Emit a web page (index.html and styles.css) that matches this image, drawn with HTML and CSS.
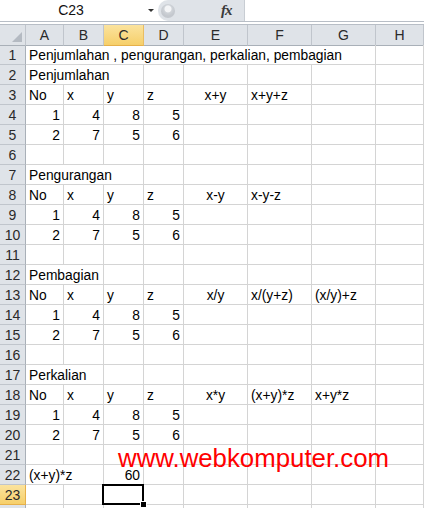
FILE: index.html
```html
<!DOCTYPE html>
<html>
<head>
<meta charset="utf-8">
<link rel="stylesheet" href="styles.css">
</head>
<body>
<div class="app">
  <div class="fbar">
    <div class="namebox"><span class="nb-text">C23</span><span class="nb-arrow"></span></div>
    <div class="capsule"><span class="cbtn"></span><span class="fx">fx</span></div>
    <div class="finput"></div>
  </div>
  <div class="gap"></div>
  <div class="sheet">
    <div class="hd corner"><span class="tri"></span></div>
    <div class="hd">A</div><div class="hd">B</div><div class="hd hsel">C</div><div class="hd">D</div><div class="hd">E</div><div class="hd">F</div><div class="hd">G</div><div class="hd">H</div>

    <div class="rh">1</div><div class="c s7">Penjumlahan , pengurangan, perkalian, pembagian</div><div class="c"></div>
    <div class="rh">2</div><div class="c s3">Penjumlahan</div><div class="c"></div><div class="c"></div><div class="c"></div><div class="c"></div><div class="c"></div>
    <div class="rh">3</div><div class="c">No</div><div class="c">x</div><div class="c">y</div><div class="c">z</div><div class="c ctr">x+y</div><div class="c">x+y+z</div><div class="c"></div><div class="c"></div>
    <div class="rh">4</div><div class="c r">1</div><div class="c r">4</div><div class="c r">8</div><div class="c r">5</div><div class="c"></div><div class="c"></div><div class="c"></div><div class="c"></div>
    <div class="rh">5</div><div class="c r">2</div><div class="c r">7</div><div class="c r">5</div><div class="c r">6</div><div class="c"></div><div class="c"></div><div class="c"></div><div class="c"></div>
    <div class="rh">6</div><div class="c"></div><div class="c"></div><div class="c"></div><div class="c"></div><div class="c"></div><div class="c"></div><div class="c"></div><div class="c"></div>

    <div class="rh">7</div><div class="c s3">Pengurangan</div><div class="c"></div><div class="c"></div><div class="c"></div><div class="c"></div><div class="c"></div>
    <div class="rh">8</div><div class="c">No</div><div class="c">x</div><div class="c">y</div><div class="c">z</div><div class="c ctr">x-y</div><div class="c">x-y-z</div><div class="c"></div><div class="c"></div>
    <div class="rh">9</div><div class="c r">1</div><div class="c r">4</div><div class="c r">8</div><div class="c r">5</div><div class="c"></div><div class="c"></div><div class="c"></div><div class="c"></div>
    <div class="rh">10</div><div class="c r">2</div><div class="c r">7</div><div class="c r">5</div><div class="c r">6</div><div class="c"></div><div class="c"></div><div class="c"></div><div class="c"></div>
    <div class="rh">11</div><div class="c"></div><div class="c"></div><div class="c"></div><div class="c"></div><div class="c"></div><div class="c"></div><div class="c"></div><div class="c"></div>

    <div class="rh">12</div><div class="c s2">Pembagian</div><div class="c"></div><div class="c"></div><div class="c"></div><div class="c"></div><div class="c"></div><div class="c"></div>
    <div class="rh">13</div><div class="c">No</div><div class="c">x</div><div class="c">y</div><div class="c">z</div><div class="c ctr">x/y</div><div class="c">x/(y+z)</div><div class="c">(x/y)+z</div><div class="c"></div>
    <div class="rh">14</div><div class="c r">1</div><div class="c r">4</div><div class="c r">8</div><div class="c r">5</div><div class="c"></div><div class="c"></div><div class="c"></div><div class="c"></div>
    <div class="rh">15</div><div class="c r">2</div><div class="c r">7</div><div class="c r">5</div><div class="c r">6</div><div class="c"></div><div class="c"></div><div class="c"></div><div class="c"></div>
    <div class="rh">16</div><div class="c"></div><div class="c"></div><div class="c"></div><div class="c"></div><div class="c"></div><div class="c"></div><div class="c"></div><div class="c"></div>

    <div class="rh">17</div><div class="c s2">Perkalian</div><div class="c"></div><div class="c"></div><div class="c"></div><div class="c"></div><div class="c"></div><div class="c"></div>
    <div class="rh">18</div><div class="c">No</div><div class="c">x</div><div class="c">y</div><div class="c">z</div><div class="c ctr">x*y</div><div class="c">(x+y)*z</div><div class="c">x+y*z</div><div class="c"></div>
    <div class="rh">19</div><div class="c r">1</div><div class="c r">4</div><div class="c r">8</div><div class="c r">5</div><div class="c"></div><div class="c"></div><div class="c"></div><div class="c"></div>
    <div class="rh">20</div><div class="c r">2</div><div class="c r">7</div><div class="c r">5</div><div class="c r">6</div><div class="c"></div><div class="c"></div><div class="c"></div><div class="c"></div>
    <div class="rh">21</div><div class="c"></div><div class="c"></div><div class="c"></div><div class="c"></div><div class="c"></div><div class="c"></div><div class="c"></div><div class="c"></div>
    <div class="rh">22</div><div class="c s2">(x+y)*z</div><div class="c r">60</div><div class="c"></div><div class="c"></div><div class="c"></div><div class="c"></div><div class="c"></div>
    <div class="rh rsel">23</div><div class="c"></div><div class="c"></div><div class="c sel"><span class="handle"></span></div><div class="c"></div><div class="c"></div><div class="c"></div><div class="c"></div><div class="c"></div>
    <div class="rh"></div><div class="c"></div><div class="c"></div><div class="c"></div><div class="c"></div><div class="c"></div><div class="c"></div><div class="c"></div><div class="c"></div>
  </div>
  <div class="watermark">www.webkomputer.com</div>
</div>
</body>
</html>
```

FILE: styles.css
```css
html, body {
  margin: 0;
  padding: 0;
  background: #ffffff;
  overflow: hidden;
}
.app {
  position: relative;
  width: 424px;
  height: 508px;
  overflow: hidden;
  font-family: "Liberation Sans", Arial, sans-serif;
  font-size: 13.8px;
  color: #000;
}
.fbar {
  display: flex;
  height: 21px;
  border-bottom: 1px solid #b8bec6;
  background: #fff;
}
.namebox {
  width: 158px;
  display: flex;
  align-items: center;
}
.nb-text {
  width: 142px;
  text-align: center;
  font-size: 14px;
  color: #111;
  line-height: 21px;
}
.nb-arrow {
  width: 0;
  height: 0;
  margin-left: 6px;
  border-left: 3px solid transparent;
  border-right: 3px solid transparent;
  border-top: 3px solid #333;
}
.capsule {
  width: 86px;
  height: 21px;
  background: #dfe3e8;
  border-radius: 10px 0 0 10px;
  display: flex;
  align-items: center;
  position: relative;
}
.cbtn {
  width: 14px;
  height: 14px;
  margin-left: 3px;
  border-radius: 50%;
  background: radial-gradient(circle at 50% 35%, #f4f5f7 0 3px, #cfd3d8 4px, #c4c8ce 7px);
}
.fx {
  margin-left: 46px;
  font-family: "Liberation Serif", "Times New Roman", serif;
  font-style: italic;
  font-weight: bold;
  font-size: 15px;
  color: #3a3a3a;
  letter-spacing: -1px;
}
.finput {
  flex: 1;
  background: #fff;
  border-left: 1px solid #c8cdd3;
}
.gap {
  height: 2px;
  background: #fff;
}
.sheet {
  display: grid;
  grid-template-columns: 26px 38px 40px 40px 40px 64px 64px 64px 1fr;
  grid-auto-rows: 20px;
  border-top: 1px solid #b8bec6;
}
.hd {
  box-sizing: border-box;
  background: #dfe3e8;
  border-right: 1px solid #c0c5cc;
  border-bottom: 1px solid #a9b0b8;
  height: 21px;
  line-height: 20px;
  text-align: center;
  color: #2a2a2a;
  font-size: 14px;
}
.corner {
  position: relative;
}
.tri {
  position: absolute;
  right: 3px;
  bottom: 3px;
  width: 0;
  height: 0;
  border-left: 10px solid transparent;
  border-bottom: 10px solid #b4bac2;
}
.hsel {
  background: linear-gradient(#fbe39e, #f6cf6a);
  border-bottom: 1px solid #e6b04a;
  border-right: 1px solid #e9bd62;
}
.rh {
  box-sizing: border-box;
  background: #dfe3e8;
  border-right: 1px solid #a9b0b8;
  border-bottom: 1px solid #c0c5cc;
  text-align: center;
  line-height: 20px;
  color: #2a2a2a;
  font-size: 14px;
}
.rsel {
  background: linear-gradient(#fbe39e, #f6cf6a);
  border-bottom: 1px solid #e6b04a;
  border-right: 1px solid #e6b04a;
}
.c {
  box-sizing: border-box;
  border-right: 1px solid #d4d4d4;
  border-bottom: 1px solid #d4d4d4;
  padding: 0 3px;
  line-height: 21px;
  white-space: nowrap;
  overflow: visible;
}
.r { text-align: right; }
.ctr { text-align: center; }
.s2 { grid-column: span 2; }
.s3 { grid-column: span 3; }
.s7 { grid-column: span 7; }
.sel {
  position: relative;
}
.sel::after {
  content: "";
  position: absolute;
  left: -2px;
  top: -1px;
  right: -1px;
  bottom: -1px;
  border: 2px solid #000;
}
.handle {
  position: absolute;
  right: -4px;
  bottom: -4px;
  width: 5px;
  height: 5px;
  background: #000;
  border: 1px solid #fff;
  z-index: 2;
}
.watermark {
  position: absolute;
  left: 118px;
  top: 446px;
  font-family: "Liberation Sans", Arial, sans-serif;
  font-size: 25.8px;
  line-height: 25px;
  color: #ff0000;
  white-space: nowrap;
}
```
